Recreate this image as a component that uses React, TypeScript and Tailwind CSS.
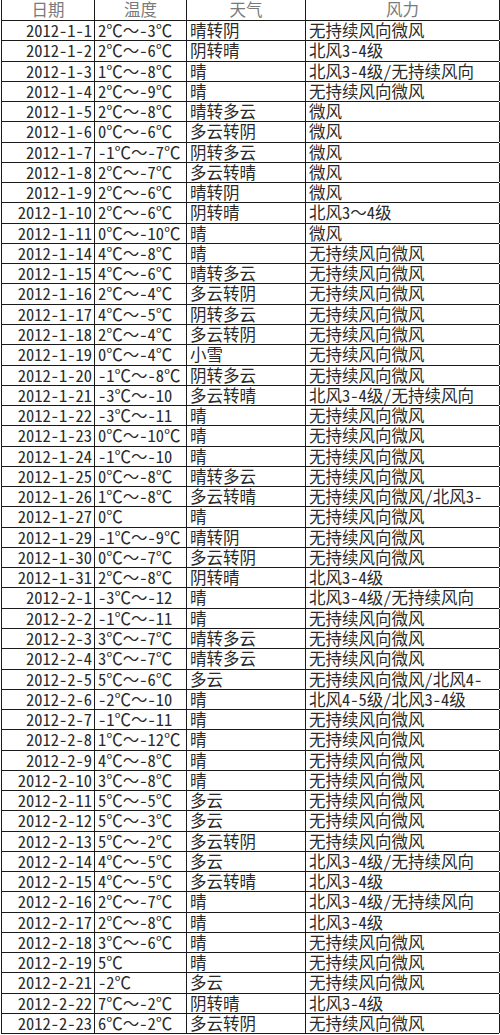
import React from "react";

type Row = [string, string, string, string];

const rows: Row[] = [
  ["2012-1-1", "2℃～-3℃", "晴转阴", "无持续风向微风"],
  ["2012-1-2", "2℃～-6℃", "阴转晴", "北风3-4级"],
  ["2012-1-3", "1℃～-8℃", "晴", "北风3-4级/无持续风向"],
  ["2012-1-4", "2℃～-9℃", "晴", "无持续风向微风"],
  ["2012-1-5", "2℃～-8℃", "晴转多云", "微风"],
  ["2012-1-6", "0℃～-6℃", "多云转阴", "微风"],
  ["2012-1-7", "-1℃～-7℃", "阴转多云", "微风"],
  ["2012-1-8", "2℃～-7℃", "多云转晴", "微风"],
  ["2012-1-9", "2℃～-6℃", "晴转阴", "微风"],
  ["2012-1-10", "2℃～-6℃", "阴转晴", "北风3～4级"],
  ["2012-1-11", "0℃～-10℃", "晴", "微风"],
  ["2012-1-14", "4℃～-8℃", "晴", "无持续风向微风"],
  ["2012-1-15", "4℃～-6℃", "晴转多云", "无持续风向微风"],
  ["2012-1-16", "2℃～-4℃", "多云转阴", "无持续风向微风"],
  ["2012-1-17", "4℃～-5℃", "阴转多云", "无持续风向微风"],
  ["2012-1-18", "2℃～-4℃", "多云转阴", "无持续风向微风"],
  ["2012-1-19", "0℃～-4℃", "小雪", "无持续风向微风"],
  ["2012-1-20", "-1℃～-8℃", "阴转多云", "无持续风向微风"],
  ["2012-1-21", "-3℃～-10", "多云转晴", "北风3-4级/无持续风向"],
  ["2012-1-22", "-3℃～-11", "晴", "无持续风向微风"],
  ["2012-1-23", "0℃～-10℃", "晴", "无持续风向微风"],
  ["2012-1-24", "-1℃～-10", "晴", "无持续风向微风"],
  ["2012-1-25", "0℃～-8℃", "晴转多云", "无持续风向微风"],
  ["2012-1-26", "1℃～-8℃", "多云转晴", "无持续风向微风/北风3-"],
  ["2012-1-27", "0℃", "晴", "无持续风向微风"],
  ["2012-1-29", "-1℃～-9℃", "晴转阴", "无持续风向微风"],
  ["2012-1-30", "0℃～-7℃", "多云转阴", "无持续风向微风"],
  ["2012-1-31", "2℃～-8℃", "阴转晴", "北风3-4级"],
  ["2012-2-1", "-3℃～-12", "晴", "北风3-4级/无持续风向"],
  ["2012-2-2", "-1℃～-11", "晴", "无持续风向微风"],
  ["2012-2-3", "3℃～-7℃", "晴转多云", "无持续风向微风"],
  ["2012-2-4", "3℃～-7℃", "晴转多云", "无持续风向微风"],
  ["2012-2-5", "5℃～-6℃", "多云", "无持续风向微风/北风4-"],
  ["2012-2-6", "-2℃～-10", "晴", "北风4-5级/北风3-4级"],
  ["2012-2-7", "-1℃～-11", "晴", "无持续风向微风"],
  ["2012-2-8", "1℃～-12℃", "晴", "无持续风向微风"],
  ["2012-2-9", "4℃～-8℃", "晴", "无持续风向微风"],
  ["2012-2-10", "3℃～-8℃", "晴", "无持续风向微风"],
  ["2012-2-11", "5℃～-5℃", "多云", "无持续风向微风"],
  ["2012-2-12", "5℃～-3℃", "多云", "无持续风向微风"],
  ["2012-2-13", "5℃～-2℃", "多云转阴", "无持续风向微风"],
  ["2012-2-14", "4℃～-5℃", "多云", "北风3-4级/无持续风向"],
  ["2012-2-15", "4℃～-5℃", "多云转晴", "北风3-4级"],
  ["2012-2-16", "2℃～-7℃", "晴", "北风3-4级/无持续风向"],
  ["2012-2-17", "2℃～-8℃", "晴", "北风3-4级"],
  ["2012-2-18", "3℃～-6℃", "晴", "无持续风向微风"],
  ["2012-2-19", "5℃", "晴", "无持续风向微风"],
  ["2012-2-21", "-2℃", "多云", "无持续风向微风"],
  ["2012-2-22", "7℃～-2℃", "阴转晴", "北风3-4级"],
  ["2012-2-23", "6℃～-2℃", "多云转阴", "无持续风向微风"],
];

// excel-like fixed column widths
const cols = "grid grid-cols-[93px_92px_119px_194px]";
const cell = "whitespace-nowrap border-r border-[#1a1a1a] leading-[19px]";

export default function App() {
  return (
    <div className="h-[1035px] w-[500px] bg-white font-['Noto_Sans_Mono_CJK_SC','Noto_Sans_CJK_SC',sans-serif] text-[16.5px] text-[#2a2a2a]">
      <div className="ml-px w-[498px] border-l border-[#1a1a1a]">
        <div className={`${cols} h-[21px] border-b border-[#1a1a1a] text-[#7a7a7a]`}>
          <div className={`${cell} text-center`}>日期</div>
          <div className={`${cell} text-center`}>温度</div>
          <div className={`${cell} text-center`}>天气</div>
          <div className={`${cell} text-center`}>风力</div>
        </div>
        {rows.map((r) => (
          <div key={r[0]} className={`${cols} h-[20.27px] border-b border-[#1a1a1a]`}>
            <div className={`${cell} pr-[2px] text-right`}>{r[0]}</div>
            <div className={`${cell} pl-[3px]`}>{r[1]}</div>
            <div className={`${cell} pl-[3px]`}>{r[2]}</div>
            <div className={`${cell} pl-[3px]`}>{r[3]}</div>
          </div>
        ))}
      </div>
    </div>
  );
}
